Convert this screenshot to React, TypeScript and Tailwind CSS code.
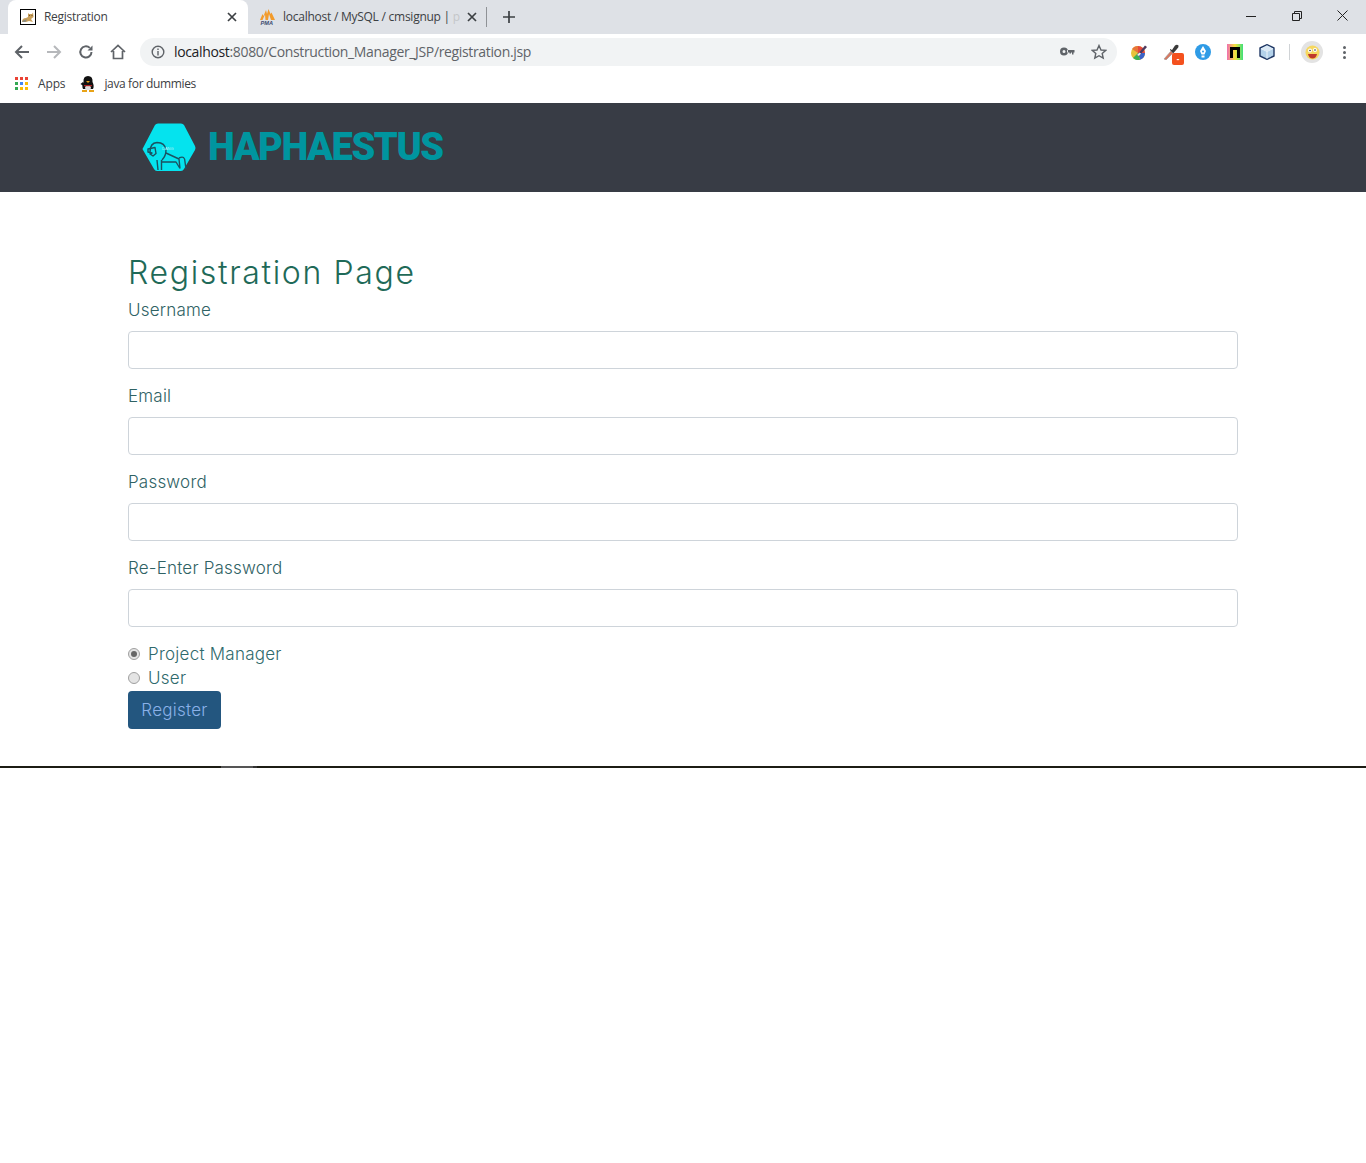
import React from "react";

const ui = "font-['Open_Sans','Noto_Sans',sans-serif]";

function Field({ label }: { label: string }) {
  return (
    <div className="mb-4">
      <label className="block h-6 mb-2 -translate-y-px text-[17px] leading-6 font-light text-[#2f6264] tracking-[0.2px]">{label}</label>
      <input type="text" className="block w-full h-[38px] bg-white border border-[#ced4da] rounded" />
    </div>
  );
}

function Radio({ checked, label }: { checked?: boolean; label: string }) {
  return (
    <div className="h-6 -translate-y-px flex items-center gap-[8px]">
      <span className="w-3 h-3 rounded-full border border-[#a0a0a0] bg-[#e4e4e4] flex items-center justify-center">
        {checked && <span className="w-1.5 h-1.5 rounded-full bg-[#666]" />}
      </span>
      <span className="text-[17px] leading-6 font-light text-[#2f6a6c] tracking-[0.25px]">{label}</span>
    </div>
  );
}

function Favicon() {
  return (
    <svg width="16" height="16" viewBox="0 0 16 16" className="shrink-0">
      <rect x="0.5" y="0.5" width="15" height="15" fill="#fff" stroke="#000" />
      <path d="M2 13 Q2 9 6 9 L8 8 L8 4 L9 5 L12 5 L13 3.5 L13.5 8 L11 10 L13 13 L9 12 L6 13Z" fill="#c9a05c" />
      <path d="M2 13 Q3 10 7 10.5 L5.5 13Z" fill="#8c8c80" />
      <path d="M9 6.5 h1 M11.5 6.5 h1" stroke="#5a3d1a" strokeWidth="0.8" />
    </svg>
  );
}

function Pma() {
  return (
    <svg width="17" height="16" viewBox="0 0 17 16" className="shrink-0">
      <path d="M1 11 L3.5 5 L4.5 7 L7 1 L8 5 L9.5 0 L11.5 5 L12.5 3.5 L16 11 H12 L10 5 L9 11 H6.5 L6 5.5 L3.5 11Z" fill="#f29b2c" />
      <text x="1.5" y="15.6" fontSize="5.6" fontWeight="700" fontStyle="italic" fill="#3b4a70" fontFamily="Liberation Sans">PMA</text>
    </svg>
  );
}

function Apps() {
  const c = ["#ea4335","#ea4335","#ea4335","#34a853","#4285f4","#fbbc05","#34a853","#fbbc05","#fbbc05"];
  return (
    <span className="grid grid-cols-3 gap-[2px] w-[13px] h-[13px]">
      {c.map((x, i) => <span key={i} className="w-[3px] h-[3px] block" style={{ background: x }} />)}
    </span>
  );
}

function Penguin() {
  return (
    <svg width="16" height="18" viewBox="0 0 16 18" className="block">
      <path d="M8 1 Q13 1 12.5 7 Q14.5 11 13 14 L3 14 Q1.5 11 3.5 7 Q3 1 8 1Z" fill="#111" />
      <path d="M5 12 Q8 8 11 12 L10.5 15 H5.5Z" fill="#ddd" />
      <path d="M6 6 h4 l-2 2z" fill="#e8a317" />
      <path d="M0.5 9 L3 7 L3.5 11Z" fill="#111" />
      <path d="M2 15 h5 v2 h-5z M9 15 h5 v2 h-5z" fill="#e8a317" />
      <path d="M4 10 h8 v1.2 h-8z" fill="#b02222" />
    </svg>
  );
}

function Lion() {
  return (
    <svg width="55" height="50" viewBox="0 0 55 50" className="shrink-0">
      <path d="M1 25 L13 2 Q14 0.5 16 0.5 L39 0.5 Q41 0.5 42 2 L53 23 Q54 25 53 27 L42 46 Q41 48 39 48 L15 48 Q13 48 12 46 L1 27 Q0 26 1 25Z" fill="#05e3ee" />
      <g fill="none" stroke="#1b5261" strokeWidth="1.4" strokeLinejoin="round">
        <path d="M8 29 Q8 20 15 19.5 Q23 19.5 24 27 Q24 33 20 37" />
        <path d="M6 26 L13 24.5 L14 30.5 L11 33 L8 31 L10 30 L6 29Z" />
        <path d="M24 30 L37 36 L38 45.5 M24 39 L34 39 L38 45.5" />
        <path d="M15 37 L16 47 M19.5 37 L19.5 47 M20 39 L24 39" />
        <path d="M37 35 Q43 32 43 39 L44 46" />
      </g>
      <text x="20" y="26.5" fontSize="4" fill="#b7f3f7" fontFamily="Liberation Sans">DANG</text>
    </svg>
  );
}

export default function App() {
  return (
    <div className="min-h-[1163px] bg-white flex flex-col">
      {/* tab strip */}
      <div className={`h-[34px] bg-[#dee1e6] flex text-[12px] text-[#3c4043] ${ui}`}>
        <div className="w-2 shrink-0" />
        <div className="w-[240px] h-[34px] bg-white rounded-t-[8px] flex items-center pl-3 pr-[11px] gap-2">
          <Favicon />
          <span className="flex-1 tracking-[-0.3px]">Registration</span>
          <svg width="10" height="10" viewBox="0 0 10 10" stroke="#3c4043" strokeWidth="1.7"><path d="M1 1 L9 9 M9 1 L1 9" /></svg>
        </div>
        <div className="w-[239px] flex items-center pl-[11px] pr-[13px] gap-[7px]">
          <Pma />
          <span className="flex-1 whitespace-nowrap tracking-[-0.25px]">localhost / MySQL / cmsignup | <span className="text-[#c4c6c9]">p</span></span>
          <svg width="10" height="10" viewBox="0 0 10 10" stroke="#3c4043" strokeWidth="1.7" className="shrink-0"><path d="M1 1 L9 9 M9 1 L1 9" /></svg>
        </div>
        <div className="w-px h-5 mt-[7px] -ml-[1px] bg-[#8f9296]" />
        <div className="w-[44px] flex items-center justify-center">
          <svg width="12" height="12" viewBox="0 0 12 12" stroke="#3c4043" strokeWidth="1.7"><path d="M6 0 V12 M0 6 H12" /></svg>
        </div>
        <div className="flex-1" />
        <div className="w-[46px] flex items-center justify-center">
          <svg width="10" height="10" viewBox="0 0 10 10" stroke="#222" className="-mt-[3px]"><path d="M0 5.5 H10" /></svg>
        </div>
        <div className="w-[46px] flex items-center justify-center">
          <svg width="10" height="10" viewBox="0 0 10 10" stroke="#222" fill="none" className="-mt-[3px]"><path d="M0.5 2.5 H7.5 V9.5 H0.5 Z M2.5 2.5 V0.5 H9.5 V7.5 H7.5" /></svg>
        </div>
        <div className="w-[46px] pr-px flex items-center justify-center">
          <svg width="11" height="11" viewBox="0 0 11 11" stroke="#222" className="-mt-[3px]"><path d="M0.5 0.5 L10.5 10.5 M10.5 0.5 L0.5 10.5" /></svg>
        </div>
      </div>
      {/* toolbar */}
      <div className="h-[36px] bg-white flex items-center">
        <div className="w-[140px] flex items-center shrink-0 pl-[14px] gap-[16px]">
          <svg width="16" height="16" viewBox="0 0 16 16" fill="none" stroke="#5f6368" strokeWidth="2"><path d="M15 8 H2 M8 2 L2 8 L8 14" /></svg>
          <svg width="16" height="16" viewBox="0 0 16 16" fill="none" stroke="#b6b8bb" strokeWidth="2"><path d="M1 8 H14 M8 2 L14 8 L8 14" /></svg>
          <svg width="16" height="16" viewBox="0 0 16 16" fill="none" stroke="#5f6368" strokeWidth="2"><path d="M13.5 8 A5.6 5.6 0 1 1 11.8 3.9" /><path d="M14.5 1.5 V6.5 H9.5 Z" fill="#5f6368" stroke="none" /></svg>
          <svg width="16" height="16" viewBox="0 0 16 16" fill="none" stroke="#5f6368" strokeWidth="1.7"><path d="M1 8 L8 1.5 L15 8 M3.5 7 V14.5 H12.5 V7" /></svg>
        </div>
        <div className={`w-[977px] h-7 rounded-full bg-[#f1f3f4] flex items-center pl-[11px] pr-[10px] text-[14px] ${ui}`}>
          <svg width="14" height="14" viewBox="0 0 14 14" fill="none" stroke="#5f6368" strokeWidth="1.4" className="shrink-0"><circle cx="7" cy="7" r="5.8" /><path d="M7 6 V10.5 M7 3.5 V5" /></svg>
          <span className="ml-[9px] -mt-[2px] flex-1 tracking-[-0.35px]"><span className="text-[#202124]">localhost</span><span className="text-[#5f6368]">:8080/Construction_Manager_JSP/registration.jsp</span></span>
          <svg width="16" height="10" viewBox="0 0 16 10" fill="#5f6368" className="shrink-0 mr-[15px] ml-px"><path d="M4 0.5 A4 4 0 1 1 4 8.5 A4 4 0 1 1 4 0.5 Z M4 3 A1.5 1.5 0 1 0 4 6 A1.5 1.5 0 1 0 4 3Z M7 3 H14.5 V5.5 H13.5 V7.5 H12 V5.5 H11 V6.5 H9.5 V5.5 H7Z" fillRule="evenodd" /></svg>
          <svg width="16" height="16" viewBox="0 0 16 16" fill="none" stroke="#5f6368" strokeWidth="1.4" className="shrink-0"><path d="M8 1.5 L10 6 L14.8 6.4 L11.2 9.5 L12.2 14.2 L8 11.7 L3.8 14.2 L4.8 9.5 L1.2 6.4 L6 6Z" /></svg>
        </div>
        <div className="flex-1 flex items-center pl-[14px] relative">
          <svg width="16" height="16" viewBox="0 0 16 16" className="shrink-0">
            <circle cx="7" cy="9" r="7" fill="#e8c23a" />
            <path d="M7 9 L1 5 A7 7 0 0 1 7 2Z" fill="#e8763a" />
            <path d="M7 9 L7 2 A7 7 0 0 1 14 9Z" fill="#e5483c" />
            <path d="M7 9 L14 9 A7 7 0 0 1 9 15.7Z" fill="#3a62c8" />
            <path d="M7 9 L9 15.7 A7 7 0 0 1 2 14Z" fill="#3cb054" />
            <path d="M6 11 L14 1.5 L16 3 L8 12 Z" fill="#4d3a5e" />
            <path d="M6 11 L8 12 L10 9.5 L8.5 8.5Z" fill="#f4f0e8" />
          </svg>
          <div className="relative ml-[16px] w-4 h-4">
            <svg width="16" height="16" viewBox="0 0 16 16"><path d="M1 15 L8 7 L10 9 L3 16Z" fill="#d87860" stroke="#9a9a9a" strokeWidth="0.6" /><path d="M7 5 L9 6 L12 1.5 Q14 0 15.5 1.5 Q16 3 14 5 L10.5 9 L11 10 L7 6Z" fill="#3a3a3a" /></svg>
            <span className={`absolute left-[9px] top-[9px] w-3 h-3 rounded-[2px] bg-[#f4511e] text-white text-[8px] leading-3 text-center font-bold ${ui}`}>-</span>
          </div>
          <svg width="16" height="16" viewBox="0 0 16 16" className="ml-[16px] shrink-0"><circle cx="8" cy="8" r="8" fill="#2e9be6" /><path d="M8 2 L11 7 L9.5 10.5 H6.5 L5 7Z M6.5 11.5 H9.5 V13.5 H6.5Z" fill="#fff" /><circle cx="8" cy="7.5" r="1" fill="#2e9be6" /></svg>
          <svg width="16" height="16" viewBox="0 0 16 16" className="ml-[16px] shrink-0">
            <defs><linearGradient id="ng" x1="0" x2="1" y1="0" y2="0"><stop offset="0" stopColor="#f06eb0" /><stop offset="0.5" stopColor="#f5e23c" /><stop offset="1" stopColor="#3de07a" /></linearGradient></defs>
            <rect width="16" height="16" fill="url(#ng)" /><path d="M3 3 H13 V14 H10 V6 H6 V14 H3Z" fill="#000" />
          </svg>
          <svg width="16" height="16" viewBox="0 0 16 16" className="ml-[16px] shrink-0"><path d="M8 0.7 L15 4 V12 L8 15.3 L1 12 V4Z" fill="#b4d2ea" stroke="#233a66" strokeWidth="1.4" strokeLinejoin="round" /><path d="M8 7.5 L14 4.5 M8 7.5 L2 4.5 M8 7.5 V14.5" stroke="#eef5fb" strokeWidth="1" /><path d="M2 4.5 L8 1.5 L14 4.5 L8 7.5Z" fill="#dbe9f5" /></svg>
          <div className="w-px h-4 ml-[14px] bg-[#d0d3d6]" />
          <div className="ml-[11px] w-[22px] h-[22px] rounded-full bg-[#e3e3e3] flex items-center justify-center">
            <svg width="15" height="15" viewBox="0 0 15 15"><circle cx="7.5" cy="7.5" r="7" fill="#f6d860" /><circle cx="5" cy="5.5" r="2" fill="#fff" /><circle cx="10" cy="5" r="2" fill="#fff" /><circle cx="5" cy="5.5" r="0.8" fill="#333" /><circle cx="10" cy="5" r="0.8" fill="#333" /><path d="M3 9 H12 Q11 13.5 7.5 13.5 Q4 13.5 3 9Z" fill="#c0392b" /></svg>
          </div>
          <div className="ml-[20px] flex flex-col gap-[2px]">
            <span className="w-[3px] h-[3px] rounded-full bg-[#5f6368]" />
            <span className="w-[3px] h-[3px] rounded-full bg-[#5f6368]" />
            <span className="w-[3px] h-[3px] rounded-full bg-[#5f6368]" />
          </div>
        </div>
      </div>
      {/* bookmarks */}
      <div className={`h-[33px] pb-[6px] bg-white flex items-center pl-[15px] text-[12px] text-[#3c4043] ${ui}`}>
        <Apps />
        <span className="ml-[10px] tracking-[-0.15px]">Apps</span>
        <span className="ml-[15px]"><Penguin /></span>
        <span className="ml-[8px] tracking-[-0.35px]">java for dummies</span>
      </div>
      {/* site header */}
      <header className="h-[89px] bg-[#383c45] flex items-center pl-[142px]">
        <Lion />
        <span className="ml-[11px] text-[38px] leading-none font-black text-[#00959f] font-['Roboto',sans-serif] tracking-[-1.4px] -mt-[2px]">HAPHAESTUS</span>
      </header>
      {/* main */}
      <main className="w-[1110px] ml-[128px] pt-[62px] font-['Inter','Open_Sans',sans-serif]">
        <h1 className="h-[38px] mb-[7px] text-[32px] leading-[38px] font-light text-[#1f6a58] tracking-[1.65px]">Registration Page</h1>
        <Field label="Username" />
        <Field label="Email" />
        <Field label="Password" />
        <Field label="Re-Enter Password" />
        <Radio checked label="Project Manager" />
        <Radio label="User" />
        <button className="block w-[93px] h-[38px] pt-px rounded bg-[#23567f] text-[#8ab1e8] text-[17px] font-light tracking-[0.25px]">Register</button>
      </main>
      <div className="mt-[37px] h-[2px] flex bg-[#1c1c14]">
        <span className="ml-[221px] w-[32px] h-[2px] bg-[#555]" />
        <span className="w-[4px] h-[2px] bg-[#333]" />
      </div>
    </div>
  );
}
